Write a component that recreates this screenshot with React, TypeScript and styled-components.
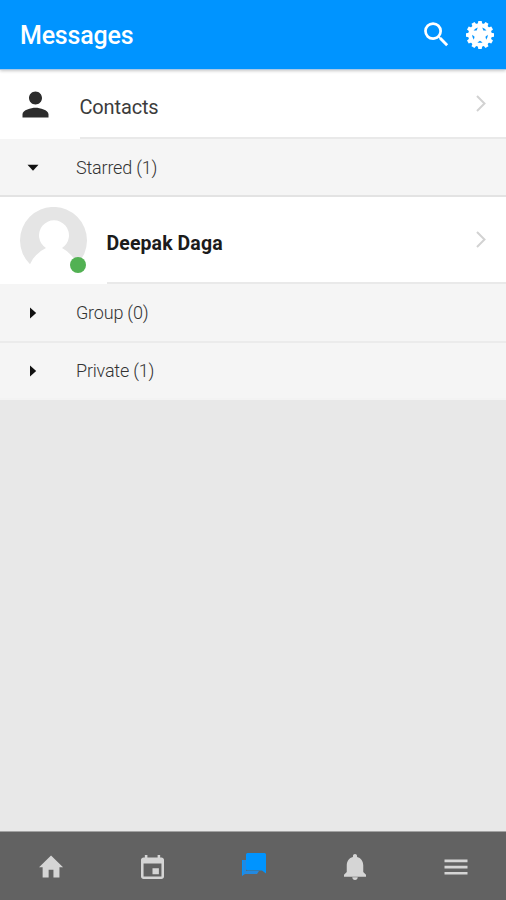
import React from "react";
import styled, { createGlobalStyle } from "styled-components";

const GlobalStyle = createGlobalStyle`
  * { box-sizing: border-box; }
  body { margin: 0; background: #e8e8e8; font-family: Roboto, "Liberation Sans", sans-serif; }
`;

const Screen = styled.div`
  display: flex;
  flex-direction: column;
  width: 506px;
  height: 900px;
  overflow: hidden;
  background: #e8e8e8;
`;

const Header = styled.header`
  display: flex;
  align-items: center;
  flex: none;
  height: 70px;
  padding: 0 11px 0 20px;
  background: #0094ff;
  border-bottom: 1px solid #a9c9e6;
  box-shadow: 0 1px 3px rgba(0, 0, 0, 0.22);
  z-index: 1;
`;

const Title = styled.h1`
  flex: 1;
  margin: 0;
  padding-top: 2px;
  color: #fff;
  font-size: 25px;
  font-weight: 500;
  letter-spacing: -0.2px;
  line-height: 30px;
`;

const Actions = styled.div`
  display: flex;
  align-items: center;
  gap: 12px;
`;

const Icon = styled.svg<{ $w: number; $h?: number; $color: string }>`
  display: block;
  flex: none;
  width: ${(p) => p.$w}px;
  height: ${(p) => p.$h ?? p.$w}px;
  fill: ${(p) => p.$color};
`;

const List = styled.main`
  flex: 1;
`;

const Row = styled.div<{ $height: number }>`
  display: flex;
  height: ${(p) => p.$height}px;
  background: #fff;
`;

const Lead = styled.div<{ $width: number; $pad: number }>`
  display: flex;
  flex: none;
  align-items: center;
  width: ${(p) => p.$width}px;
  padding-left: ${(p) => p.$pad}px;
`;

const RowBody = styled.div`
  display: flex;
  flex: 1;
  align-items: center;
  justify-content: space-between;
  padding-right: 18px;
  border-bottom: 2px solid #e9e9e9;
`;

const RowLabel = styled.span<{ $strong?: boolean }>`
  padding-top: ${(p) => (p.$strong ? 9 : 6)}px;
  color: ${(p) => (p.$strong ? "#1b1b1b" : "#3c3c3c")};
  font-size: ${(p) => (p.$strong ? 19.5 : 20)}px;
  font-weight: ${(p) => (p.$strong ? 700 : 400)};
  letter-spacing: ${(p) => (p.$strong ? "0.1px" : "-0.15px")};
  line-height: 24px;
`;

const Section = styled.div<{ $height: number; $line?: string }>`
  display: flex;
  align-items: center;
  height: ${(p) => p.$height}px;
  background: #f5f5f5;
  border-bottom: 2px solid ${(p) => p.$line ?? "#e3e3e3"};
`;

const SectionMark = styled.div`
  display: flex;
  justify-content: center;
  width: 66px;
  margin-right: 10px;
`;

const SectionLabel = styled.span`
  padding-top: 1px;
  color: #333;
  font-size: 18px;
  font-weight: 300;
  letter-spacing: -0.2px;
  line-height: 22px;
`;

const Avatar = styled.div`
  position: relative;
  width: 67px;
  height: 67px;
`;

const Presence = styled.span`
  position: absolute;
  right: 1px;
  bottom: 1px;
  width: 16px;
  height: 16px;
  border-radius: 50%;
  background: #52b153;
`;

const NavBar = styled.nav`
  display: grid;
  grid-template-columns: repeat(5, 1fr);
  flex: none;
  height: 69px;
  padding: 2px 0 0 1px;
  background: #626262;
  border-top: 1px solid #a2a2a2;
`;

const NavItem = styled.div`
  display: flex;
  align-items: center;
  justify-content: center;
`;

const GEAR_TEETH = Array.from({ length: 12 }, (_, i) => i * 30);
const GEAR_HOLES = Array.from({ length: 5 }, (_, i) => i * 72 + 36);

const Gear = () => (
  <Icon viewBox="0 0 30 30" $w={30} $color="#fff">
    {GEAR_TEETH.map((a) => (
      <path key={a} d="M12.7 4.5 13.3 1h3.4l.6 3.5z" transform={`rotate(${a} 15 15)`} />
    ))}
    <circle cx="15" cy="15" r="11.8" />
    {GEAR_HOLES.map((a) => (
      <path key={a} d="M12.4 7.6q2.600-.9 5.200 0L15 9.300z" fill="#0094ff" transform={`rotate(${a} 15 15)`} />
    ))}
  </Icon>
);

const Chevron = () => (
  <Icon viewBox="0 0 14 18" $w={14} $h={18} $color="none">
    <path d="M3 1 10.5 8.5 3 16" fill="none" stroke="#d2d2d2" strokeWidth="2" />
  </Icon>
);

const Marker = ({ open }: { open?: boolean }) =>
  open ? (
    <Icon viewBox="0 0 12 7" $w={12} $h={7} $color="#111"><path d="M.5 .7h11L6 6.8z" /></Icon>
  ) : (
    <Icon viewBox="0 0 7 12" $w={7} $h={12} $color="#111"><path d="M0 .5v11L6.2 6z" /></Icon>
  );

export default function App() {
  return (
    <>
      <GlobalStyle />
      <Screen>
        <Header>
          <Title>Messages</Title>
          <Actions>
            <Icon viewBox="0 0 24 24" $w={33} $color="#fff">
              <path d="M15.5 14h-.79l-.28-.27A6.471 6.471 0 0 0 16 9.5 6.5 6.5 0 1 0 9.5 16c1.61 0 3.09-.59 4.23-1.57l.27.28v.79l5 4.99L20.49 19l-4.99-5zm-6 0C7.01 14 5 11.99 5 9.5S7.01 5 9.5 5 14 7.01 14 9.5 11.99 14 9.5 14z" />
            </Icon>
            <Gear />
          </Actions>
        </Header>
        <List>
          <Row $height={69}>
            <Lead $width={79.5} $pad={15.5}>
              <Icon viewBox="0 0 24 24" $w={39} $color="#2c2c2c">
                <path d="M12 12c2.21 0 4-1.79 4-4s-1.79-4-4-4-4 1.79-4 4 1.79 4 4 4zm0 2c-2.67 0-8 1.34-8 4v2h16v-2c0-2.66-5.33-4-8-4z" />
              </Icon>
            </Lead>
            <RowBody>
              <RowLabel>Contacts</RowLabel>
              <Chevron />
            </RowBody>
          </Row>
          <Section $height={58}>
            <SectionMark><Marker open /></SectionMark>
            <SectionLabel>Starred (1)</SectionLabel>
          </Section>
          <Row $height={87}>
            <Lead $width={106.5} $pad={20}>
              <Avatar>
                <Icon viewBox="0 0 67 67" $w={67} $color="#e5e5e5">
                  <path d="M10 57.3A33.5 33.5 0 1 1 57 57.3Q52 46 42 41A15 15 0 1 0 26 41Q15 46 10 57.3Z" />
                </Icon>
                <Presence />
              </Avatar>
            </Lead>
            <RowBody>
              <RowLabel $strong>Deepak Daga</RowLabel>
              <Chevron />
            </RowBody>
          </Row>
          <Section $height={59} $line="#ebebeb">
            <SectionMark><Marker /></SectionMark>
            <SectionLabel>Group (0)</SectionLabel>
          </Section>
          <Section $height={57} $line="#f3f3f3">
            <SectionMark><Marker /></SectionMark>
            <SectionLabel>Private (1)</SectionLabel>
          </Section>
        </List>
        <NavBar>
          <NavItem>
            <Icon viewBox="2.8 3.3 20 17" preserveAspectRatio="none" $w={24} $h={22} $color="#d5d5d5" overflow="visible">
              <path d="M10 20v-6h4v6h5v-8h3L12 3 2 12h3v8z" />
            </Icon>
          </NavItem>
          <NavItem>
            <Icon viewBox="3 1 18 20" preserveAspectRatio="none" $w={23} $h={24} $color="#d5d5d5">
              <path d="M17 12h-5v5h5v-5zM16 1v2H8V1H6v2H5c-1.11 0-1.99.9-1.99 2L3 19c0 1.1.89 2 2 2h14c1.1 0 2-.9 2-2V5c0-1.1-.9-2-2-2h-1V1h-2zm3 18H5V8h14v11z" />
            </Icon>
          </NavItem>
          <NavItem>
            <Icon viewBox="0 0 26 30" $w={26} $h={30} $color="#0094ff">
              <path d="M1 8h4v11h13l-2 3H4l-3 2z" fill="#2389e0" />
              <path d="M1 8h1.2v13L1 24z" />
              <path d="M6.5 1h17q1.5 0 1.5 1.5V21.5l-4-3H6.5Q5 18.5 5 17V2.5Q5 1 6.5 1z" />
            </Icon>
          </NavItem>
          <NavItem>
            <Icon viewBox="4 2.5 16 19.5" preserveAspectRatio="none" $w={22} $h={26} $color="#d5d5d5">
              <path d="M12 22c1.1 0 2-.9 2-2h-4c0 1.1.89 2 2 2zm6-6v-5c0-3.07-1.64-5.64-4.5-6.32V4c0-.83-.67-1.5-1.5-1.5s-1.5.67-1.5 1.5v.68C7.63 5.36 6 7.92 6 11v5l-2 2v1.5h16V18l-2-2z" />
            </Icon>
          </NavItem>
          <NavItem>
            <Icon viewBox="0 0 24 16" $w={24} $h={16} $color="#d5d5d5">
              <path d="M.5.5h23v2.700H.5zM.5 6.700h23v2.700H.5zM.5 12.900h23v2.700H.5z" />
            </Icon>
          </NavItem>
        </NavBar>
      </Screen>
    </>
  );
}
